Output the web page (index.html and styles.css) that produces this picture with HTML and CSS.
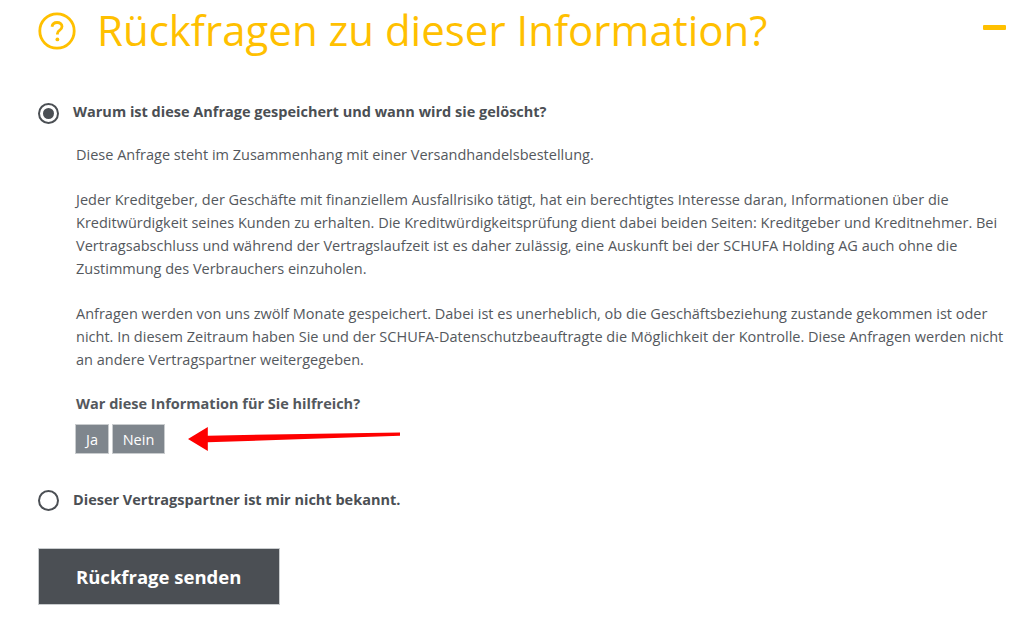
FILE: index.html
```html
<!DOCTYPE html>
<html lang="de">
<head>
<meta charset="utf-8">
<title>Rückfragen</title>
<link rel="stylesheet" href="styles.css">
</head>
<body>
<main class="page">
  <header class="head">
    <svg class="q-icon" viewBox="0 0 38 38" aria-hidden="true">
      <circle cx="19" cy="19" r="17.2" fill="none" stroke="#ffc000" stroke-width="2.8"/>
      <path d="M14 14.800c.4-2.900 2.400-4.300 5.100-4.300 2.900 0 4.900 1.600 4.900 4 0 1.900-1 2.900-2.500 3.900-1.500 1-2.100 1.800-2.100 3.300v.8" fill="none" stroke="#ffc000" stroke-width="2.800"/>
      <circle cx="19.4" cy="27.400" r="1.900" fill="#ffc000"/>
    </svg>
    <h1 class="title">Rückfragen zu dieser Information?</h1>
    <span class="collapse"></span>
  </header>

  <section class="option first">
    <span class="radio checked"></span>
    <strong class="label">Warum ist diese Anfrage gespeichert und wann wird sie gelöscht?</strong>
  </section>

  <div class="answer">
    <p>Diese Anfrage steht im Zusammenhang mit einer Versandhandelsbestellung.</p>
    <p>Jeder Kreditgeber, der Geschäfte mit finanziellem Ausfallrisiko tätigt, hat ein berechtigtes Interesse daran, Informationen über die<br>Kreditwürdigkeit seines Kunden zu erhalten. Die Kreditwürdigkeitsprüfung dient dabei beiden Seiten: Kreditgeber und Kreditnehmer. Bei<br>Vertragsabschluss und während der Vertragslaufzeit ist es daher zulässig, eine Auskunft bei der SCHUFA Holding AG auch ohne die<br>Zustimmung des Verbrauchers einzuholen.</p>
    <p>Anfragen werden von uns zwölf Monate gespeichert. Dabei ist es unerheblich, ob die Geschäftsbeziehung zustande gekommen ist oder<br>nicht. In diesem Zeitraum haben Sie und der SCHUFA-Datenschutzbeauftragte die Möglichkeit der Kontrolle. Diese Anfragen werden nicht<br>an andere Vertragspartner weitergegeben.</p>
    <strong class="helpful">War diese Information für Sie hilfreich?</strong>
    <div class="votes">
      <button class="vote ja">Ja</button>
      <button class="vote nein">Nein</button>
      <svg class="arrow" viewBox="0 0 214 26" aria-hidden="true">
        <path d="M0 13 20 1v8.600l194-3.200v3.200L20 16.400V25z" fill="#fe0000"/>
      </svg>
    </div>
  </div>

  <section class="option second">
    <span class="radio"></span>
    <strong class="label">Dieser Vertragspartner ist mir nicht bekannt.</strong>
  </section>

  <button class="send">Rückfrage senden</button>
</main>
</body>
</html>
```

FILE: styles.css
```css
* { box-sizing: border-box; }
html, body { margin: 0; padding: 0; background: #fff; }
body { width: 1024px; height: 624px; overflow: hidden; font-family: "Open Sans", "Liberation Sans", sans-serif; color: #4b4f54; }
.page { padding: 0 0 0 38px; display: flex; flex-direction: column; align-items: flex-start; }
.head { display: flex; align-items: center; width: 968px; height: 60px; }
.q-icon { width: 38px; height: 38px; flex: none; margin-top: 2px; }
.title { margin: 0 0 0 21px; font-size: 42px; line-height: 60px; font-weight: 400; color: #ffc000; white-space: nowrap; flex: 1; }
.collapse { width: 23px; height: 5px; background: #ffc000; margin-top: -6px; border-radius: 1px; }
.option { display: flex; align-items: center; height: 22px; }
.option.first { margin-top: 42px; }
.option.second { margin-top: 35px; }
.radio { width: 21px; height: 21px; border: 2px solid #4b4f54; border-radius: 50%; flex: none; margin-right: 14px; display: flex; align-items: center; justify-content: center; }
.radio.checked::before { content: ""; width: 11px; height: 11px; border-radius: 50%; background: #4b4f54; }
.label { font-size: 14.5px; line-height: 20px; font-weight: 700; white-space: nowrap; }
.first .label { margin-top: -2px; }
.answer { margin: 19px 0 0 38px; font-size: 14.5px; line-height: 23px; color: #54585d; }
.answer p { margin: 0 0 22px; white-space: nowrap; }
.helpful { display: block; font-weight: 700; margin-top: -1px; }
.votes { display: flex; gap: 3px; margin: 9px 0 0 -1px; position: relative; }
.vote { height: 30px; border: 1px solid #c9ccce; background: #7f868d; color: #fff; font: 400 14.5px "Open Sans", sans-serif; padding: 0; }
.ja { width: 34px; }
.nein { width: 53px; }
.arrow { position: absolute; left: 113px; top: 2px; width: 212px; height: 26px; }
.send { margin-top: 37px; width: 242px; height: 57px; background: #4b4f54; color: #fff; border: 1px solid #c9ccce; font: 700 18.5px "Open Sans", sans-serif; text-align: left; padding: 0 0 0 37px; }
```
